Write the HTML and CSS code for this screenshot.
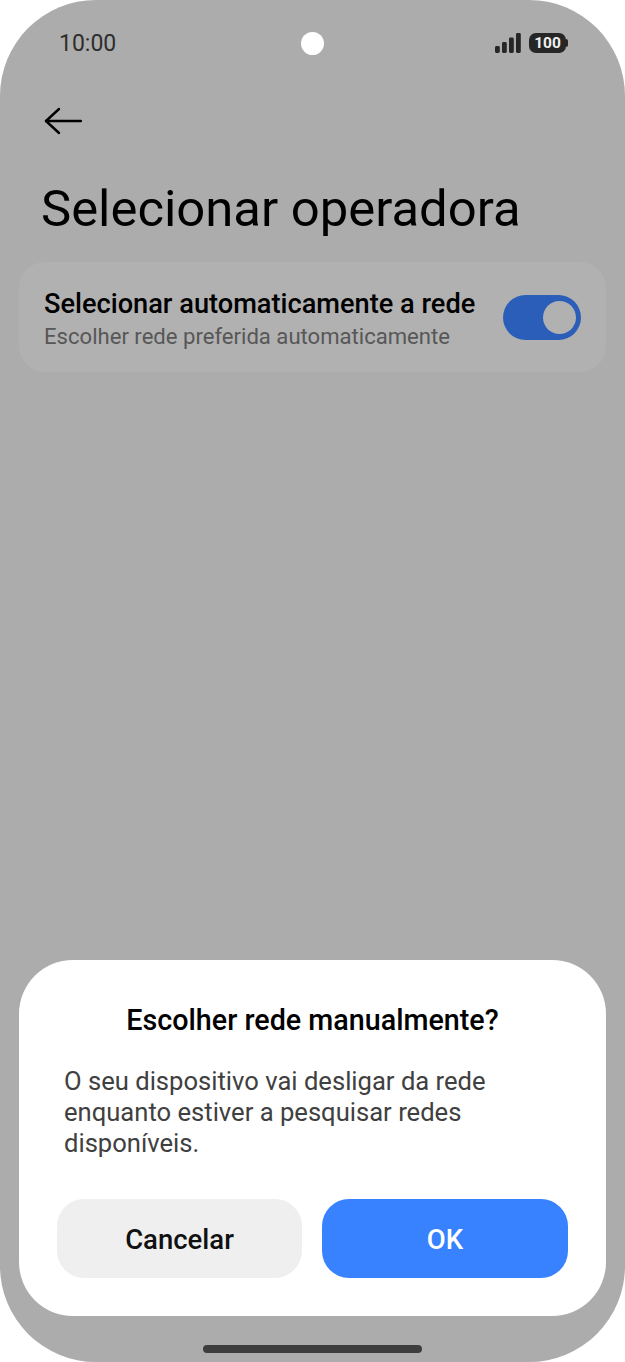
FILE: index.html
```html
<!DOCTYPE html>
<html lang="pt">

<head>
    <meta charset="UTF-8">
    <title>Selecionar operadora</title>
    <link rel="stylesheet" href="styles.css">
</head>

<body>
    <div class="screen">
        <div class="status-bar">
            <span class="clock">10:00</span>
            <span class="camera"></span>
            <div class="status-icons">
                <svg class="signal" width="26" height="20" viewBox="0 0 26 20">
                    <rect x="0" y="13" width="4.8" height="7" rx="1.4"/>
                    <rect x="7" y="9" width="4.8" height="11" rx="1.4"/>
                    <rect x="14" y="4.5" width="4.8" height="15.5" rx="1.4"/>
                    <rect x="21" y="0" width="4.8" height="20" rx="1.4"/>
                </svg>
                <div class="battery"><span class="battery-level">100</span></div>
            </div>
        </div>

        <div class="back-row">
            <svg width="38" height="28" viewBox="0 0 38 28" fill="none" stroke="#000" stroke-width="2.4" stroke-linecap="round" stroke-linejoin="round">
                <path d="M37 14H2"/>
                <path d="M15 2 2 14l13 12"/>
            </svg>
        </div>

        <h1 class="page-title">Selecionar operadora</h1>

        <div class="setting-card">
            <div class="setting-text">
                <div class="setting-name">Selecionar automaticamente a rede</div>
                <div class="setting-desc">Escolher rede preferida automaticamente</div>
            </div>
            <div class="toggle"><span class="toggle-knob"></span></div>
        </div>

        <div class="dialog">
            <h2 class="dialog-title">Escolher rede manualmente?</h2>
            <p class="dialog-text">O seu dispositivo vai desligar da rede enquanto estiver a pesquisar redes disponíveis.</p>
            <div class="dialog-buttons">
                <button class="btn btn-cancel">Cancelar</button>
                <button class="btn btn-ok">OK</button>
            </div>
        </div>

        <div class="home-bar"></div>
    </div>
</body>

</html>
```

FILE: styles.css
```css
* {
    box-sizing: border-box;
}

html, body {
    margin: 0;
    padding: 0;
    background-color: #fff;
}

.screen {
    display: flex;
    flex-direction: column;
    width: 625px;
    height: 1362px;
    overflow: hidden;
    border-radius: 96px;
    background-color: #acacac;
    font-family: Roboto, "Liberation Sans", sans-serif;
}

.status-bar {
    display: grid;
    grid-template-columns: 1fr auto 1fr;
    align-items: center;
    height: 26px;
    margin-top: 30px;
    padding: 0 59px;
}

.clock {
    font-size: 23px;
    font-weight: 450;
    color: #2e2e2e;
}

.camera {
    width: 23px;
    height: 23px;
    border-radius: 50%;
    background-color: #fff;
}

.status-icons {
    display: flex;
    justify-content: flex-end;
    align-items: center;
    gap: 8px;
    padding-bottom: 2px;
}

.signal {
    fill: #262626;
}

.battery {
    position: relative;
    display: flex;
    justify-content: center;
    align-items: center;
    width: 37px;
    height: 20px;
    border-radius: 7px;
    background-color: #262626;
}

/* battery terminal */
.battery::after {
    content: "";
    position: absolute;
    right: -2px;
    top: 6px;
    width: 2px;
    height: 8px;
    border-radius: 0 2px 2px 0;
    background-color: #262626;
}

.battery-level {
    font-size: 15.5px;
    font-weight: 700;
    color: #f0f0f0;
}

.back-row {
    height: 28px;
    margin-top: 51px;
    padding-left: 44px;
}

.page-title {
    margin: 44px 0 0 41px;
    font-size: 50.8px;
    line-height: 60px;
    font-weight: 400;
    color: #000;
}

.setting-card {
    display: flex;
    justify-content: space-between;
    align-items: center;
    height: 110px;
    margin: 23px 19px 0;
    padding: 0 25px;
    border-radius: 26px;
    background-color: #b1b1b1;
}

.setting-text {
    padding-top: 3px;
}

.setting-name {
    font-size: 27.2px;
    line-height: 32px;
    font-weight: 470;
    color: #000;
}

.setting-desc {
    margin-top: 2px;
    font-size: 22.1px;
    line-height: 28px;
    color: #575757;
}

.toggle {
    display: flex;
    justify-content: flex-end;
    align-items: center;
    width: 78px;
    height: 45px;
    padding-right: 5px;
    border-radius: 23px;
    background-color: #2a5eb8;
}

.toggle-knob {
    width: 33px;
    height: 33px;
    border-radius: 50%;
    background-color: #b1b1b1;
}

.dialog {
    margin: auto 19px 0;
    height: 356px;
    padding: 42px 38px 38px;
    border-radius: 54px;
    background-color: #fff;
}

.dialog-title {
    margin: 0;
    text-align: center;
    font-size: 28.7px;
    line-height: 36px;
    font-weight: 470;
    color: #000;
}

.dialog-text {
    margin: 28px 0 0;
    padding: 0 7px;
    font-size: 25.6px;
    line-height: 31px;
    color: #404040;
}

.dialog-buttons {
    display: grid;
    grid-template-columns: 245px 1fr;
    gap: 20px;
    margin-top: 40px;
}

.btn {
    height: 79px;
    padding-top: 2px;
    border: none;
    border-radius: 27px;
    font-family: inherit;
    font-size: 27.5px;
    font-weight: 470;
}

.btn-cancel {
    background-color: #efefef;
    color: #111;
}

.btn-ok {
    background-color: #3882ff;
    color: #fff;
}

.home-bar {
    flex: none;
    width: 219px;
    height: 8px;
    margin: 29px auto 9px;
    border-radius: 4px;
    background-color: #3d3d3d;
}
```
